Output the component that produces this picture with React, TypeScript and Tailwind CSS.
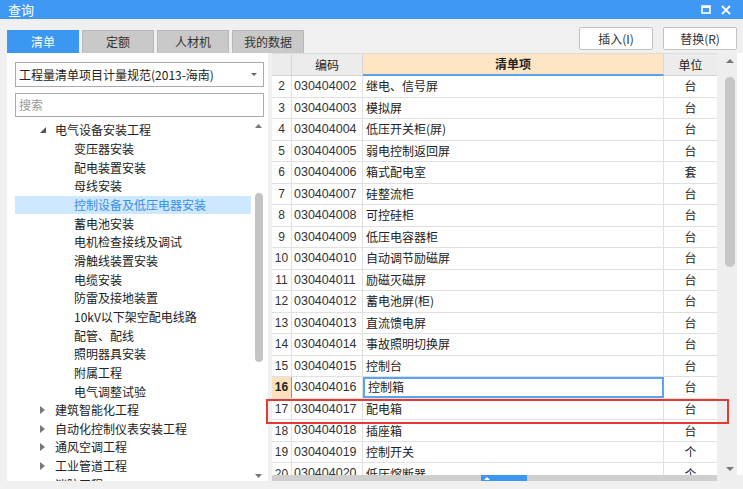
import React from 'react';

const FONT = { fontFamily: '"Noto Sans CJK SC", "Noto Sans", sans-serif' };

const treeItems: { label: string; level: 0 | 1; arrow?: 'open' | 'closed'; selected?: boolean }[] = [
  { label: '电气设备安装工程', level: 0, arrow: 'open' },
  { label: '变压器安装', level: 1 },
  { label: '配电装置安装', level: 1 },
  { label: '母线安装', level: 1 },
  { label: '控制设备及低压电器安装', level: 1, selected: true },
  { label: '蓄电池安装', level: 1 },
  { label: '电机检查接线及调试', level: 1 },
  { label: '滑触线装置安装', level: 1 },
  { label: '电缆安装', level: 1 },
  { label: '防雷及接地装置', level: 1 },
  { label: '10kV以下架空配电线路', level: 1 },
  { label: '配管、配线', level: 1 },
  { label: '照明器具安装', level: 1 },
  { label: '附属工程', level: 1 },
  { label: '电气调整试验', level: 1 },
  { label: '建筑智能化工程', level: 0, arrow: 'closed' },
  { label: '自动化控制仪表安装工程', level: 0, arrow: 'closed' },
  { label: '通风空调工程', level: 0, arrow: 'closed' },
  { label: '工业管道工程', level: 0, arrow: 'closed' },
  { label: '消防工程', level: 0, arrow: 'closed' },
];

const rows: [number, string, string, string][] = [
  [2, '030404002', '继电、信号屏', '台'],
  [3, '030404003', '模拟屏', '台'],
  [4, '030404004', '低压开关柜(屏)', '台'],
  [5, '030404005', '弱电控制返回屏', '台'],
  [6, '030404006', '箱式配电室', '套'],
  [7, '030404007', '硅整流柜', '台'],
  [8, '030404008', '可控硅柜', '台'],
  [9, '030404009', '低压电容器柜', '台'],
  [10, '030404010', '自动调节励磁屏', '台'],
  [11, '030404011', '励磁灭磁屏', '台'],
  [12, '030404012', '蓄电池屏(柜)', '台'],
  [13, '030404013', '直流馈电屏', '台'],
  [14, '030404014', '事故照明切换屏', '台'],
  [15, '030404015', '控制台', '台'],
  [16, '030404016', '控制箱', '台'],
  [17, '030404017', '配电箱', '台'],
  [18, '030404018', '插座箱', '台'],
  [19, '030404019', '控制开关', '个'],
  [20, '030404020', '低压熔断器', '个'],
];

const TreeArrow = ({ kind }: { kind: 'open' | 'closed' }) =>
  kind === 'open' ? (
    <svg width="6" height="6" viewBox="0 0 6 6" className="shrink-0">
      <path d="M6 0 L6 6 L0 6 Z" fill="#555" />
    </svg>
  ) : (
    <svg width="5" height="8" viewBox="0 0 5 8" className="shrink-0">
      <path d="M0 0 L5 4 L0 8 Z" fill="#777" />
    </svg>
  );

const LeftPanel = () => (
  <div className="w-[261px] ml-[7px] bg-white flex flex-col pl-[8px] pr-[4px] pt-[9px]">
    <div className="h-[25px] border border-[#acacac] flex items-center justify-between pl-[3px] pr-[6px]">
      <span className="text-[12px] text-[#222] leading-none">工程量清单项目计量规范(2013-海南)</span>
      <svg width="6" height="3" viewBox="0 0 6 3">
        <path d="M0 0 L6 0 L3 3 Z" fill="#666" />
      </svg>
    </div>
    <div className="mt-[6px] h-[24px] border border-[#acacac] flex items-center pl-[3px]">
      <span className="text-[12px] text-[#999] leading-none">搜索</span>
    </div>
    <div className="mt-[4px] flex-1 flex overflow-hidden">
      <div className="flex-1 flex flex-col overflow-hidden">
        {treeItems.map((t) => (
          <div
            key={t.label}
            className={`h-[18.67px] shrink-0 flex items-center ${t.selected ? 'bg-[#cde8ff]' : ''}`}
          >
            {t.level === 0 ? (
              <div className="flex items-center">
                <div className="w-[40px] flex items-center pl-[25px]">
                  {t.arrow && <TreeArrow kind={t.arrow} />}
                </div>
                <span className="text-[12px] text-[#222] leading-none whitespace-nowrap">{t.label}</span>
              </div>
            ) : (
              <span
                className={`pl-[59px] text-[12px] leading-none whitespace-nowrap ${
                  t.selected ? 'text-[#3a8ee6]' : 'text-[#222]'
                }`}
              >
                {t.label}
              </span>
            )}
          </div>
        ))}
      </div>
      <div className="w-[11px] ml-[2px] flex flex-col items-center pt-[3px] pb-[3px]">
        <svg width="7" height="4" viewBox="0 0 7 4">
          <path d="M0 4 L3.5 0 L7 4 Z" fill="#777" />
        </svg>
        <div className="mt-[65px] w-[8px] h-[169px] rounded-[4px] bg-[#c4c4c4]" />
        <div className="flex-1" />
        <svg width="7" height="4" viewBox="0 0 7 4">
          <path d="M0 0 L7 0 L3.5 4 Z" fill="#777" />
        </svg>
      </div>
    </div>
  </div>
);

const Table = () => (
  <div className="ml-[4px] flex-1 flex flex-col bg-white overflow-hidden">
    <div className="flex-1 flex overflow-hidden">
      <div className="w-[445px] flex flex-col overflow-hidden">
        <div className="h-[23px] shrink-0 flex border-t border-[#dcdcdc]">
          <div className="w-[20px] bg-[#ececec] border-r border-b border-[#d6d6d6]" />
          <div className="w-[71px] bg-[#ececec] border-r border-b border-[#d6d6d6] flex items-center justify-center text-[12px] text-[#222]">
            编码
          </div>
          <div className="w-[301px] bg-[#fde5c6] border-r border-[#d6d6d6] border-b-2 border-b-[#5a9ff0] flex items-center justify-center text-[12px] font-bold text-[#222]">
            清单项
          </div>
          <div className="w-[53px] bg-[#ececec] border-b border-[#d6d6d6] flex items-center justify-center text-[12px] text-[#222]">
            单位
          </div>
        </div>
        {rows.map(([n, code, name, unit]) => {
          const sel = n === 16;
          return (
            <div key={n} className="h-[21.53px] shrink-0 flex border-b border-[#e0e0e0]">
              <div
                className={`w-[20px] border-r flex items-center justify-center text-[12px] ${
                  sel ? 'bg-[#fde1bc] font-bold text-[#222] border-[#5a9ff0]' : 'text-[#333] border-[#e0e0e0]'
                }`}
                style={{ fontFamily: '"Liberation Sans", sans-serif' }}
              >
                {n}
              </div>
              <div
                className="w-[71px] border-r border-[#e0e0e0] flex items-center pl-[2px] text-[12.5px] text-[#333] leading-none"
                style={{ fontFamily: '"Liberation Sans", sans-serif' }}
              >
                {code}
              </div>
              <div
                className={`w-[301px] flex items-center pl-[3px] text-[12px] text-[#222] leading-none ${
                  sel ? 'border-2 border-[#5aa2f2] pl-[1px]' : 'border-r border-[#e0e0e0]'
                }`}
              >
                {name}
              </div>
              <div className="w-[53px] flex items-center justify-center text-[12px] text-[#222]">{unit}</div>
            </div>
          );
        })}
      </div>
      <div className="w-[20px] bg-[#eeeeee] flex flex-col items-end pr-[2px] pt-[6px] pb-[4px]">
        <div className="w-[10px] flex justify-center">
          <svg width="8" height="4" viewBox="0 0 8 4">
            <path d="M0 4 L4 0 L8 4 Z" fill="#777" />
          </svg>
        </div>
        <div className="mt-[14px] w-[10px] h-[190px] rounded-[5px] bg-[#c6c6c6]" />
        <div className="flex-1" />
        <div className="w-[10px] flex justify-center">
          <svg width="8" height="4" viewBox="0 0 8 4">
            <path d="M0 0 L8 0 L4 4 Z" fill="#777" />
          </svg>
        </div>
      </div>
    </div>
    <div className="h-[6px] shrink-0 flex">
      <div className="w-[445px] bg-[#cfcfcf] flex">
        <div className="ml-[209px] w-[46px] bg-[#3d97f2] flex items-center pl-[3px]">
          <svg width="6" height="3" viewBox="0 0 6 3">
            <path d="M0 3 L3 0 L6 3 Z" fill="#fff" />
          </svg>
        </div>
      </div>
      <div className="flex-1 bg-[#eeeeee]" />
    </div>
  </div>
);

export default function App() {
  return (
    <div className="relative w-[743px] h-[489px] bg-[#f0f0f0] flex flex-col overflow-hidden" style={FONT}>
      <div className="h-[19px] shrink-0 bg-[#3f98f3] flex items-center justify-between pl-[8px] pr-[12px]">
        <span className="text-[13px] text-white leading-none">查询</span>
        <div className="flex items-center gap-[10px]">
          <svg width="10" height="9" viewBox="0 0 10 9">
            <rect x="1" y="1" width="8" height="7" fill="none" stroke="#fff" strokeWidth="1.6" />
            <rect x="1" y="1" width="8" height="2" fill="#fff" />
          </svg>
          <svg width="10" height="10" viewBox="0 0 10 10">
            <path d="M1 1 L9 9 M9 1 L1 9" stroke="#fff" strokeWidth="1.8" />
          </svg>
        </div>
      </div>

      <div className="h-[34px] shrink-0 flex items-end pl-[7px]">
        <div className="flex gap-[3px]">
          <div className="w-[72px] h-[23px] bg-[#3c97f1] flex items-center justify-center text-[12px] text-white">
            清单
          </div>
          {['定额', '人材机', '我的数据'].map((t) => (
            <div
              key={t}
              className="w-[72px] h-[23px] bg-[#c9c9c9] border border-b-0 border-[#b8b8b8] flex items-center justify-center text-[12px] text-[#333]"
            >
              {t}
            </div>
          ))}
        </div>
        <div className="ml-auto flex gap-[10px] pr-[6px] pb-[3px]">
          {['插入(I)', '替换(R)'].map((b) => (
            <div
              key={b}
              className="w-[74px] h-[23px] bg-white border border-[#c2c2c2] rounded-[2px] flex items-center justify-center text-[12px] text-[#333]"
            >
              {b}
            </div>
          ))}
        </div>
      </div>

      <div className="h-[428px] shrink-0 flex">
        <LeftPanel />
        <Table />
      </div>

      <div className="absolute left-[266px] top-[399px] w-[463px] h-[25px] border-2 border-[#e53935] pointer-events-none" />
    </div>
  );
}
